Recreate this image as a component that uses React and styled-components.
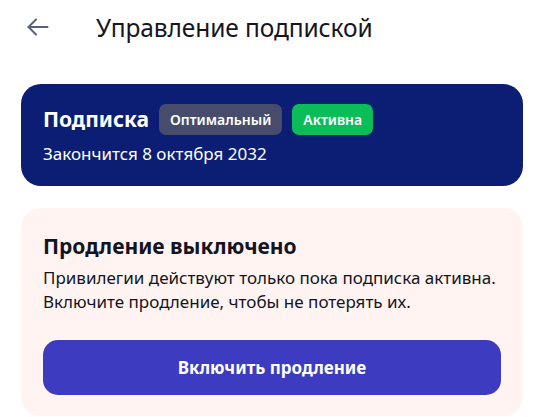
import React from 'react'
import styled, { createGlobalStyle } from 'styled-components'

const Global = createGlobalStyle`
  html, body {
    margin: 0;
    padding: 0;
    background: #ffffff;
  }
  body {
    font-family: "Noto Sans", "Open Sans", sans-serif;
    color: #14141f;
    overflow: hidden;
  }
`;

const Page = styled.div`
  width: 545px;
  height: 417px;
  padding: 0 22px 0 21px;
  box-sizing: border-box;
`;

const Header = styled.div`
  display: flex;
  align-items: center;
  height: 54px;
  padding-left: 5px;
  margin-bottom: 30px;

  h1 {
    margin: 0 0 0 46px;
    font-size: 24.5px;
    font-weight: 400;
    letter-spacing: -0.1px;
    color: #16161e;
  }
`;

const BackButton = styled.button`
  border: none;
  background: none;
  padding: 0;
  width: 24px;
  height: 24px;
  display: flex;
  align-items: center;
  justify-content: center;
  color: #5a6078;
  cursor: pointer;
`;

const SubscriptionCard = styled.div`
  background: #0c1e73;
  border-radius: 20px;
  padding: 20px 22px 22px;
  color: #ffffff;
  height: 102px;
  box-sizing: border-box;
`;

const TitleRow = styled.div`
  display: flex;
  align-items: center;
  gap: 10px;

  h2 {
    margin: 0;
    font-size: 21px;
    font-weight: 700;
    line-height: 31px;
  }
`;

const Badge = styled.span`
  display: inline-flex;
  align-items: center;
  height: 31px;
  padding: 0 11px;
  border-radius: 7px;
  font-size: 14px;
  font-weight: 600;
  background: ${p => (p.$tone === 'green' ? '#0bbd59' : '#474c6c')};
  color: #ffffff;
`;

const Expires = styled.p`
  margin: 8px 0 0;
  font-size: 17px;
  line-height: 22px;
`;

const RenewalCard = styled.div`
  margin-top: 22px;
  background: #fff4f2;
  border-radius: 20px;
  padding: 24px 22px 22px;
  height: 208px;
  box-sizing: border-box;

  h3 {
    margin: 0;
    font-size: 21px;
    font-weight: 700;
    line-height: 28px;
  }

  p {
    margin: 6px 0 0;
    font-size: 17px;
    line-height: 24px;
  }
`;

const PrimaryButton = styled.button`
  display: block;
  width: 100%;
  height: 55px;
  margin-top: 26px;
  border: none;
  border-radius: 15px;
  background: #3d3bbf;
  color: #ffffff;
  font-family: inherit;
  font-size: 17px;
  font-weight: 700;
  cursor: pointer;
`;

export default function App() {
  return (
    <Page>
      <Global />
      <Header>
        <BackButton aria-label="Назад">
          <svg width="24" height="24" viewBox="0 0 24 24" fill="none" stroke="currentColor" strokeWidth="2" strokeLinecap="round" strokeLinejoin="round">
            <path d="M21.5 12H2.5" />
            <path d="M10 4.5L2.5 12l7.5 7.5" />
          </svg>
        </BackButton>
        <h1>Управление подпиской</h1>
      </Header>

      <SubscriptionCard>
        <TitleRow>
          <h2>Подписка</h2>
          <Badge>Оптимальный</Badge>
          <Badge $tone="green">Активна</Badge>
        </TitleRow>
        <Expires>Закончится 8 октября 2032</Expires>
      </SubscriptionCard>

      <RenewalCard>
        <h3>Продление выключено</h3>
        <p>
          Привилегии действуют только пока подписка активна.
          <br />
          Включите продление, чтобы не потерять их.
        </p>
        <PrimaryButton>Включить продление</PrimaryButton>
      </RenewalCard>
    </Page>
  );
}
